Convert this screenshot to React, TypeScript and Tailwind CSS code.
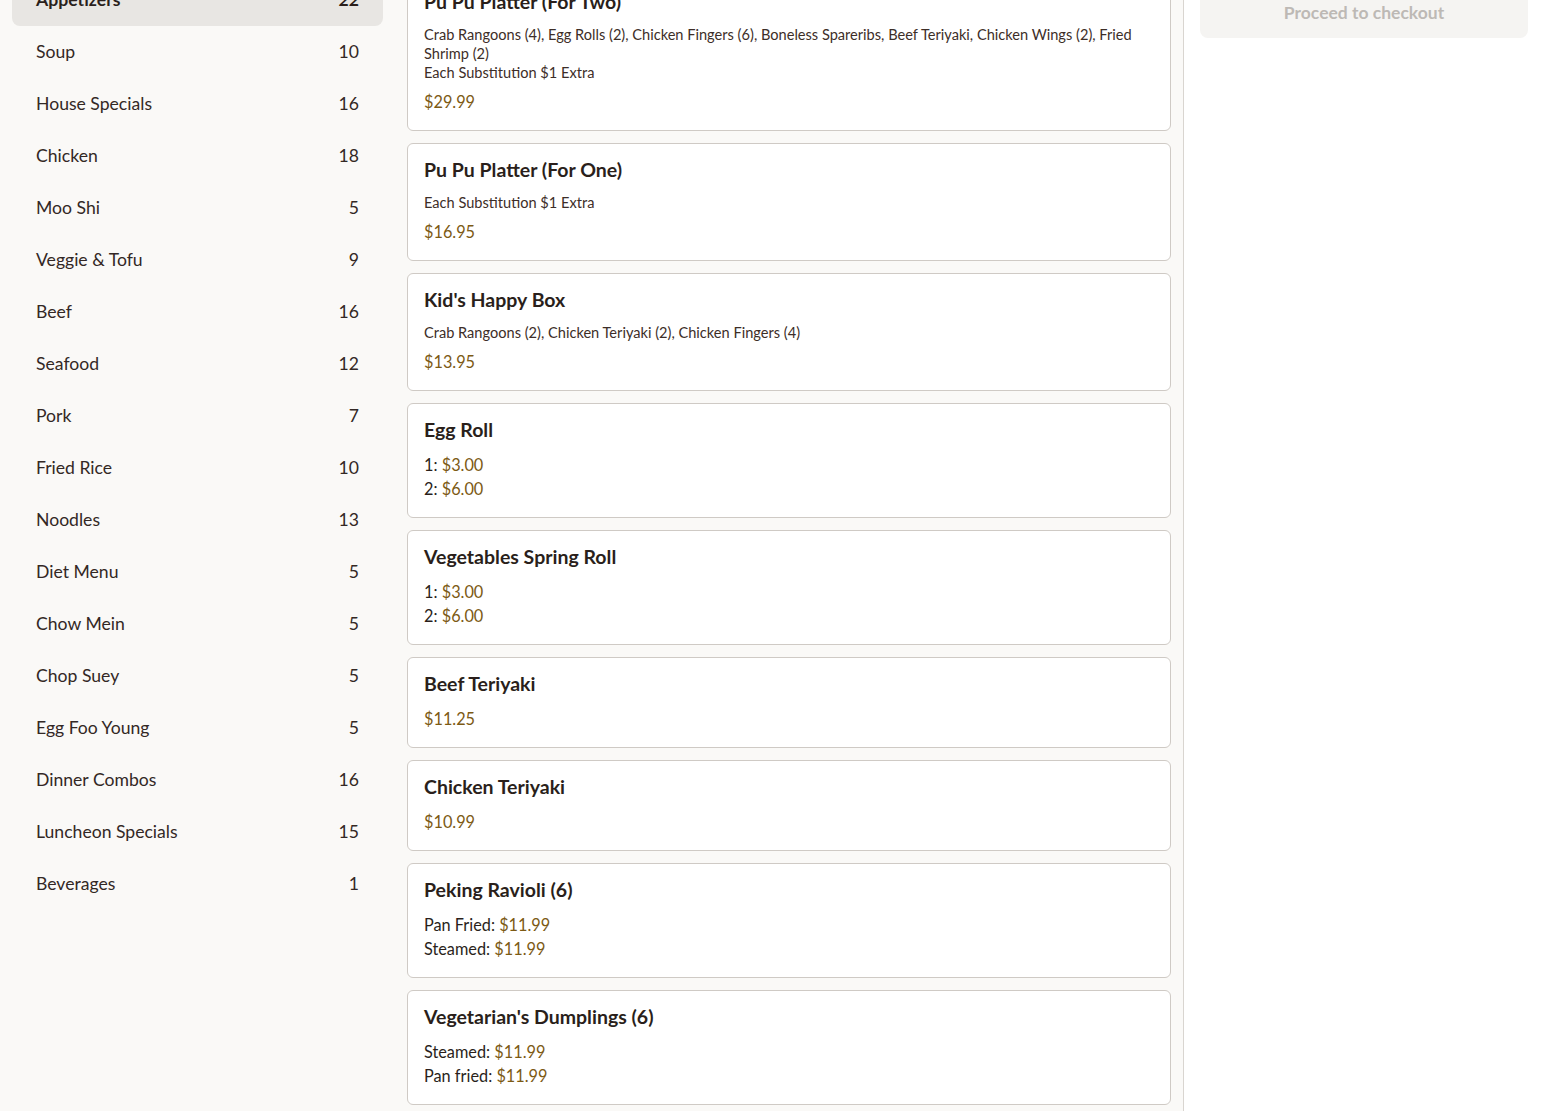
import React from "react";

const cats: [string, number][] = [
  ["Appetizers", 22],
  ["Soup", 10],
  ["House Specials", 16],
  ["Chicken", 18],
  ["Moo Shi", 5],
  ["Veggie & Tofu", 9],
  ["Beef", 16],
  ["Seafood", 12],
  ["Pork", 7],
  ["Fried Rice", 10],
  ["Noodles", 13],
  ["Diet Menu", 5],
  ["Chow Mein", 5],
  ["Chop Suey", 5],
  ["Egg Foo Young", 5],
  ["Dinner Combos", 16],
  ["Luncheon Specials", 15],
  ["Beverages", 1],
];

type Item = {
  name: string;
  desc?: string[];
  price?: string;
  options?: [string, string][];
};

const items: Item[] = [
  {
    name: "Pu Pu Platter (For Two)",
    desc: [
      "Crab Rangoons (4), Egg Rolls (2), Chicken Fingers (6), Boneless Spareribs, Beef Teriyaki, Chicken Wings (2), Fried Shrimp (2)",
      "Each Substitution $1 Extra",
    ],
    price: "$29.99",
  },
  { name: "Pu Pu Platter (For One)", desc: ["Each Substitution $1 Extra"], price: "$16.95" },
  {
    name: "Kid's Happy Box",
    desc: ["Crab Rangoons (2), Chicken Teriyaki (2), Chicken Fingers (4)"],
    price: "$13.95",
  },
  { name: "Egg Roll", options: [["1", "$3.00"], ["2", "$6.00"]] },
  { name: "Vegetables Spring Roll", options: [["1", "$3.00"], ["2", "$6.00"]] },
  { name: "Beef Teriyaki", price: "$11.25" },
  { name: "Chicken Teriyaki", price: "$10.99" },
  { name: "Peking Ravioli (6)", options: [["Pan Fried", "$11.99"], ["Steamed", "$11.99"]] },
  { name: "Vegetarian's Dumplings (6)", options: [["Steamed", "$11.99"], ["Pan fried", "$11.99"]] },
  { name: "Crab Rangoons (8)", price: "$8.99" },
];

export default function App() {
  return (
    <div
      className="flex h-[1111px] overflow-hidden bg-[#faf9f7] text-[#2a1f1b]"
      style={{ fontFamily: "Lato, 'Noto Sans', sans-serif" }}
    >
      {/* Sidebar */}
      <aside className="w-[395px] shrink-0 px-3">
        <ul className="-mt-[26px] flex flex-col">
          {cats.map(([n, c], i) => (
            <li
              key={n}
              className={`flex h-[52px] items-center justify-between rounded-lg px-6 text-[17.6px] ${
                i === 0 ? "bg-[#e8e6e3] font-bold text-[#2a1f1b]" : "text-[#332825]"
              }`}
            >
              <span>{n}</span>
              <span>{c}</span>
            </li>
          ))}
        </ul>
      </aside>

      {/* Main */}
      <main className="w-[789px] shrink-0 border-r border-[#d9d5d0] px-3">
        <div className="-mt-[25px] flex flex-col gap-3">
          {items.map((it) => (
            <div
              key={it.name}
              className="rounded-md border border-[#cfcac5] bg-white px-4 py-4"
            >
              <h3 className="text-[19.5px] font-bold leading-5 text-[#2a1f1b]">{it.name}</h3>
              {it.desc && (
                <div className="mt-[13px] text-[14.6px] leading-[19px] text-[#3d2e28]">
                  {it.desc.map((d) => (
                    <p key={d}>{d}</p>
                  ))}
                </div>
              )}
              {it.price && (
                <div
                  className={`${it.desc ? "mt-2" : "mt-[13px]"} text-[16.3px] leading-6 text-[#7c5a14]`}
                >
                  {it.price}
                </div>
              )}
              {it.options && (
                <div className="mt-[13px] text-[16.3px] leading-6 text-[#2a1f1b]">
                  {it.options.map(([k, v]) => (
                    <div key={k}>
                      {k}: <span className="text-[#7c5a14]">{v}</span>
                    </div>
                  ))}
                </div>
              )}
            </div>
          ))}
        </div>
      </main>

      {/* Right panel */}
      <aside className="flex-1 bg-white px-4">
        <div className="-mt-[11px] flex h-[49px] items-center justify-center rounded-lg bg-[#f5f4f2] text-[17.5px] font-bold text-[#bdb9b5]">
          Proceed to checkout
        </div>
      </aside>
    </div>
  );
}
